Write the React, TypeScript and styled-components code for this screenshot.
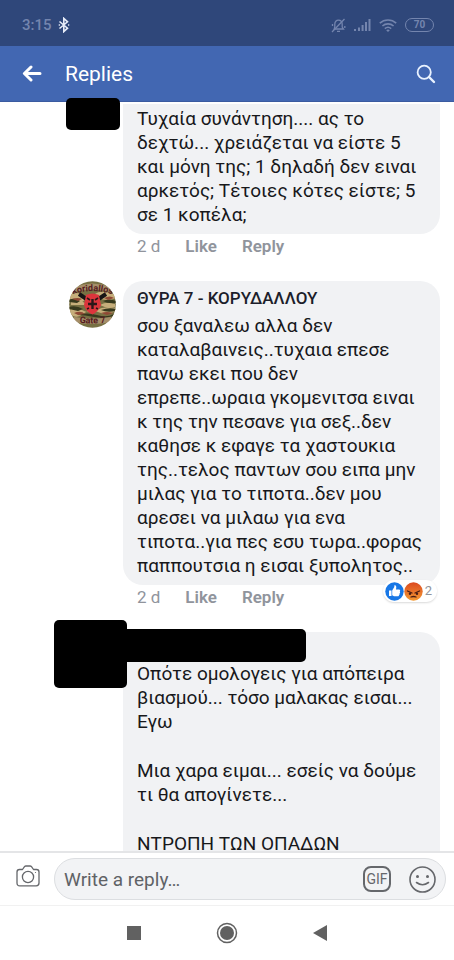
import React from "react";
import styled, { createGlobalStyle } from "styled-components";

const GlobalStyle = createGlobalStyle`
  * { box-sizing: border-box; }
  body { margin: 0; background: #fff; font-family: Roboto, "Liberation Sans", sans-serif; }
  button, input { font: inherit; color: inherit; border: 0; padding: 0; background: none; }
  button { cursor: pointer; }
  svg { display: block; }
`;

const Screen = styled.div`
  display: flex;
  flex-direction: column;
  height: 100vh;
  overflow: hidden;
`;

const StatusBar = styled.div`
  flex: none;
  display: flex;
  align-items: center;
  gap: 8px;
  height: 46px;
  padding: 4px 20px 0 22px;
  background: #2f477a;
  color: #7485ae;
`;

const Clock = styled.span`
  flex: 1;
  display: flex;
  align-items: center;
  gap: 6px;
  font-size: 15px;
  font-weight: 500;
`;

const Header = styled.header`
  flex: none;
  display: flex;
  align-items: center;
  gap: 23px;
  height: 56px;
  padding: 0 18px 0 22px;
  background: #4267b2;
  border-bottom: 1px solid #3b5ba0;
  color: #fff;
`;

const Title = styled.h1`
  flex: 1;
  margin: 0;
  font-size: 21px;
  font-weight: 400;
`;

const Feed = styled.main`
  position: relative;
  flex: 1;
  min-height: 0;
  margin-top: -4px;
  padding: 6px 14px 0 69px;
  overflow: hidden;
`;

const Comment = styled.article`
  display: grid;
  grid-template-columns: 47px minmax(0, 1fr);
  column-gap: 7px;
`;

const Bubble = styled.div<{ $cutTop?: boolean; $cutBottom?: boolean }>`
  display: flex;
  flex-direction: column;
  gap: ${(p) => (p.$cutBottom ? "1px" : "4px")};
  grid-column: 2;
  padding: ${(p) => (p.$cutTop ? "3px 0 7px 14px" : "5px 0 7px 14px")};
  border-radius: ${(p) =>
    p.$cutTop ? "0 0 20px 20px" : p.$cutBottom ? "20px 20px 0 0" : "20px"};
  background: #f1f2f4;
`;

const Name = styled.h2`
  min-height: 24px;
  margin: 0;
  font-size: 17px;
  line-height: 24px;
  font-weight: 500;
  color: #1c1e2b;
`;

const Message = styled.div`
  display: flex;
  flex-direction: column;
  gap: 25px;
  font-size: 19px;
  line-height: 24px;
  color: #17181b;
  white-space: pre-line;
`;

const Paragraph = styled.p`
  margin: 0;
`;

const Footer = styled.div`
  grid-column: 2;
  display: flex;
  align-items: center;
  gap: 25px;
  height: 47px;
  padding: 0 3px 23px 14px;
  font-size: 17px;
  line-height: 24px;
  color: #90949c;
`;

const Action = styled.button`
  font-weight: 600;
`;

const Reactions = styled.button`
  align-self: flex-start;
  display: flex;
  align-items: center;
  height: 22px;
  margin: -5px 0 0 auto;
  padding: 0 5px 0 2px;
  border-radius: 11px;
  background: #fff;
  box-shadow: 0 1px 2px rgba(0, 0, 0, 0.15);
  font-size: 13px;
`;

const Count = styled.span`
  margin-left: 2px;
`;

const Redaction = styled.span<{ $x: number; $y: number; $w: number; $h: number }>`
  position: absolute;
  left: ${(p) => p.$x}px;
  top: ${(p) => p.$y}px;
  width: ${(p) => p.$w}px;
  height: ${(p) => p.$h}px;
  border-radius: 5px;
  background: #000;
`;

const Composer = styled.form`
  flex: none;
  display: flex;
  align-items: center;
  gap: 14px;
  height: 55px;
  padding: 0 8px 0 16px;
  border-top: 2px solid #e4e5e7;
  border-bottom: 1px solid #f1f1f1;
  color: #65676b;
`;

const CameraButton = styled.button`
  align-self: flex-start;
  margin-top: 12px;
`;

const Field = styled.div`
  flex: 1;
  display: flex;
  align-items: center;
  gap: 18px;
  min-width: 0;
  height: 42px;
  padding: 0 9px;
  border: 1px solid #dcdee1;
  border-radius: 21px;
  background: #f2f3f5;
`;

const ReplyInput = styled.input`
  flex: 1;
  min-width: 0;
  font-size: 19px;
  outline: 0;
  &::placeholder { color: #5f6266; opacity: 1; }
`;

const NavBar = styled.nav`
  flex: none;
  display: flex;
  align-items: center;
  justify-content: center;
  gap: 75px;
  height: 54px;
  padding-right: 1px;
  color: #616161;
`;

const Bluetooth = () => (
  <svg width="12" height="16" viewBox="0 0 12 16" fill="none" stroke="#e7ecf8" strokeWidth="1.6">
    <path d="M1.5 4.5 9.5 11.2 5.8 14.6V1.4L9.5 4.8 1.5 11.5" />
    <path d="M.8 8h.9M10.3 8h.9" strokeWidth="1.8" />
  </svg>
);

const Muted = () => (
  <svg width="15" height="15" viewBox="0 0 15 15" fill="none" stroke="currentColor" strokeWidth="1.3">
    <path d="M3.2 11h9.3l-1.3-2V6.2C11.2 3.8 9.7 2.2 7.5 2.2S3.8 3.8 3.8 6.2V9z" />
    <path d="M6 13.3h3M1 14 13.5 1" />
    <path d="M1.5 6v2M13.8 8v2" />
  </svg>
);

const Signal = () => (
  <svg width="17" height="14" viewBox="0 0 17 14" fill="currentColor">
    <path d="M0 11h2v2H0zM4 9.5h2V13H4zM7.6 7h2v6h-2zM11 4h2v9h-2zM14.5 1h2v12h-2z" />
  </svg>
);

const Wifi = () => (
  <svg width="18" height="15" viewBox="0 0 18 15" fill="none" stroke="currentColor" strokeWidth="1.6">
    <path d="M.8 5.2a12 12 0 0 1 16.4 0M3.4 8a8.3 8.3 0 0 1 11.2 0M5.8 10.6a5 5 0 0 1 6.4 0" />
    <path d="M7.2 12.2 9 14l1.8-1.8a3 3 0 0 0-3.6 0z" fill="currentColor" stroke="none" />
  </svg>
);

const Battery = styled.span`
  width: 29px;
  height: 14px;
  border: 1px solid currentColor;
  border-radius: 7px;
  font-size: 10px;
  line-height: 12px;
  font-weight: 700;
  text-align: center;
`;

const BackArrow = () => (
  <svg width="20" height="17" viewBox="0 0 20 17" fill="none" stroke="#fff" strokeWidth="3" strokeLinecap="round" strokeLinejoin="round">
    <path d="M18 8.5H3M9 2 2.4 8.5 9 15" />
  </svg>
);

const Search = () => (
  <svg width="20" height="20" viewBox="0 0 20 20" fill="none" stroke="#e9f2ff" strokeLinecap="round">
    <circle cx="8.2" cy="8.2" r="6.6" strokeWidth="1.8" />
    <path d="m13 13 5 5" strokeWidth="2.4" />
  </svg>
);

const Avatar = () => (
  <svg width="47" height="47" viewBox="0 0 47 47" role="img" aria-label="Group avatar">
    <defs>
      <clipPath id="disc"><circle cx="23.5" cy="23.5" r="23.3" /></clipPath>
      <path id="upper" d="M5 13q18.500-6 37 0" />
      <path id="lower" d="M5 41q18.500 3 37 0" />
    </defs>
    <g clipPath="url(#disc)">
      <rect width="47" height="47" fill="#777043" />
      <path d="M0 14q8-4 14 0t12-1 21 1v3q-9 4-17 0t-14 2-16-2zM0 29q7-4 13 0t14 0 20-2v3q-10 5-18 1t-15 2-14-1zM2 21q6-3 12 0t3 3-15 0zM31 24q7-4 15-1v3q-8 2-15-2z" fill="#c6ae7b" />
      <path d="M0 19q6-3 11 1l-3 2-8-1zM34 20q6-3 13 0v2q-8 1-13-2zM0 26q7-2 14 2l-5 2-9-2zM32 29q8-3 15-1v2q-9 2-15-1zM8 34q10-3 20 0t17-1v2q-11 3-20 1t-17-2z" fill="#36381d" />
      <path d="M3 18q6-2 10 0l-4 2zM35 17q6-3 10 0l-6 2zM5 32q7-3 11 1l-7 1zM32 32q6-2 12 0l-6 2z" fill="#8f4935" />
      <path d="m10 13 9 6M37 13l-9 6" stroke="#171515" strokeWidth="4" />
      <path d="M17 14q6.500-3 13 0l2 10q-2 6-8.500 9.500Q17 31 15 24z" fill="#dc353c" />
      <path d="M23.500 18v10M19 23h9" stroke="#2b1718" strokeWidth="2.400" />
      <path d="m18 17 3 2M29 17l-3 2M18 28l2-1M29 28l-2-1" stroke="#2b1718" strokeWidth="1.600" />
      <path d="M5 6q18.500-7 37 0v5q-18.500-5-37 0zM5 36q18.500 3 37 0v5q-18.500 4-37 0z" fill="#c4a283" opacity=".6" />
      <g fill="#561b21" fontSize="9" fontWeight="700">
        <text><textPath href="#upper" startOffset="50%" textAnchor="middle">koridallos</textPath></text>
        <text><textPath href="#lower" startOffset="50%" textAnchor="middle">Gate 7</textPath></text>
      </g>
    </g>
  </svg>
);

const LikeFace = () => (
  <svg width="19" height="19" viewBox="0 0 19 19">
    <circle cx="9.500" cy="9.500" r="9.200" fill="#1877e6" />
    <path d="M4 8.500h2.500V14H4zM7.200 8.600 9.300 5V3.400c1.600-.5 2.500.8 1.700 4h3c1.300 0 1.500 1.500.7 2 .7.600.5 1.500-.2 1.800.4.700.1 1.500-.5 1.700.1.800-.4 1.300-1.200 1.300H9L7.200 13.300z" fill="#fff" />
  </svg>
);

const AngryFace = () => (
  <svg width="19" height="19" viewBox="0 0 19 19">
    <defs>
      <linearGradient id="angry" x2="0" y2="1">
        <stop stopColor="#dc4a20" /><stop offset="1" stopColor="#f49a33" />
      </linearGradient>
    </defs>
    <circle cx="9.500" cy="9.500" r="9.200" fill="url(#angry)" />
    <path d="m3.500 9 4.500 2M15.500 9 11 11M7 15q2.500-1 5 0" stroke="#4b1d12" strokeWidth="1.300" fill="none" strokeLinecap="round" />
    <circle cx="6" cy="11.800" r="1.200" fill="#4b1d12" /><circle cx="13" cy="11.800" r="1.200" fill="#4b1d12" />
  </svg>
);

const Camera = () => (
  <svg width="24" height="22" viewBox="0 0 24 22" fill="none" stroke="currentColor" strokeWidth="1.300" strokeLinejoin="round">
    <path d="M3.500 4.500h3L8.500 1.600Q9 1 10 1h4q1 0 1.500.6l2 2.900h3Q23 4.500 23 7v11q0 2.800-2.800 2.800H3.800Q1 20.800 1 18V7q0-2.500 2.500-2.500z" />
    <circle cx="12" cy="12" r="5.600" />
    <circle cx="19.500" cy="7.500" r=".6" fill="currentColor" stroke="none" />
  </svg>
);

const GifBadge = styled.button`
  width: 28px;
  height: 26px;
  border: 2px solid #65676b;
  border-radius: 8px;
  font-size: 14px;
  line-height: 22px;
`;

const Smile = () => (
  <svg width="27" height="27" viewBox="0 0 27 27" fill="none" stroke="currentColor" strokeWidth="1.600" strokeLinecap="round">
    <circle cx="13.500" cy="13.500" r="12.500" />
    <path d="M7.500 16.500q6 4.500 12 0" />
    <circle cx="8.500" cy="10.500" r="1.500" fill="currentColor" stroke="none" />
    <circle cx="18.500" cy="10.500" r="1.500" fill="currentColor" stroke="none" />
  </svg>
);

const messages = {
  first: [
    "Τυχαία συνάντηση.... ας το\nδεχτώ... χρειάζεται να είστε 5\nκαι μόνη της; 1 δηλαδή δεν ειναι\nαρκετός; Τέτοιες κότες είστε; 5\nσε 1 κοπέλα;",
  ],
  second: [
    "σου ξαναλεω αλλα δεν\nκαταλαβαινεις..τυχαια επεσε\nπανω εκει που δεν\nεπρεπε..ωραια γκομενιτσα ειναι\nκ της την πεσανε για σεξ..δεν\nκαθησε κ εφαγε τα χαστουκια\nτης..τελος παντων σου ειπα μην\nμιλας για το τιποτα..δεν μου\nαρεσει να μιλαω για ενα\nτιποτα..για πες εσυ τωρα..φορας\nπαππουτσια η εισαι ξυπολητος..",
  ],
  third: [
    "Οπότε ομολογεις για απόπειρα\nβιασμού... τόσο μαλακας εισαι...\nΕγω",
    "Μια χαρα ειμαι... εσείς να δούμε\nτι θα απογίνετε...",
    "ΝΤΡΟΠΗ ΤΩΝ ΟΠΑΔΩΝ",
  ],
};

const Text = ({ parts }: { parts: string[] }) => (
  <Message>
    {parts.map((part) => (
      <Paragraph key={part}>{part}</Paragraph>
    ))}
  </Message>
);

const CommentFooter = ({ children }: { children?: React.ReactNode }) => (
  <Footer>
    <time>2 d</time>
    <Action>Like</Action>
    <Action>Reply</Action>
    {children}
  </Footer>
);

export default function App() {
  return (
    <Screen>
      <GlobalStyle />
      <StatusBar>
        <Clock>3:15 <Bluetooth /></Clock>
        <Muted />
        <Signal />
        <Wifi />
        <Battery>70</Battery>
      </StatusBar>
      <Header>
        <button aria-label="Back"><BackArrow /></button>
        <Title>Replies</Title>
        <button aria-label="Search"><Search /></button>
      </Header>
      <Feed>
        <Comment>
          <Bubble $cutTop><Text parts={messages.first} /></Bubble>
          <CommentFooter />
        </Comment>
        <Comment>
          <Avatar />
          <Bubble>
            <Name>ΘΥΡΑ 7 - ΚΟΡΥΔΑΛΛΟΥ</Name>
            <Text parts={messages.second} />
          </Bubble>
          <CommentFooter>
            <Reactions aria-label="2 reactions">
              <LikeFace />
              <AngryFace />
              <Count>2</Count>
            </Reactions>
          </CommentFooter>
        </Comment>
        <Comment>
          <Bubble $cutBottom>
            <Name />
            <Text parts={messages.third} />
          </Bubble>
        </Comment>
        <Redaction $x={66} $y={0} $w={54} $h={32} />
        <Redaction $x={54} $y={522} $w={73} $h={68} />
        <Redaction $x={120} $y={531} $w={186} $h={33} />
      </Feed>
      <Composer>
        <CameraButton type="button" aria-label="Add a photo"><Camera /></CameraButton>
        <Field>
          <ReplyInput aria-label="Write a reply" placeholder="Write a reply…" />
          <GifBadge type="button">GIF</GifBadge>
          <button type="button" aria-label="Add an emoji"><Smile /></button>
        </Field>
      </Composer>
      <NavBar>
        <button aria-label="Recent apps">
          <svg width="14" height="14" viewBox="0 0 14 14"><path d="M0 0h14v14H0z" fill="currentColor" /></svg>
        </button>
        <button aria-label="Home">
          <svg width="22" height="22" viewBox="0 0 22 22">
            <circle cx="11" cy="11" r="9.500" fill="none" stroke="currentColor" strokeWidth="1.500" />
            <circle cx="11" cy="11" r="7" fill="currentColor" />
          </svg>
        </button>
        <button aria-label="Back">
          <svg width="14" height="16" viewBox="0 0 14 16"><path d="M14 0v16L0 8z" fill="currentColor" /></svg>
        </button>
      </NavBar>
    </Screen>
  );
}
